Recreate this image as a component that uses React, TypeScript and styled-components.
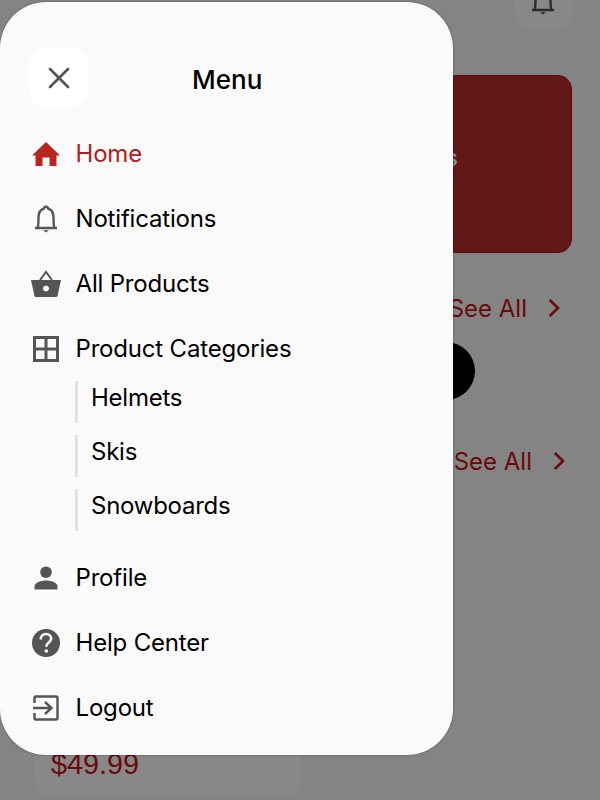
import * as React from "react";
import styled, { createGlobalStyle } from "styled-components";
import { X } from "lucide-react";

const GlobalStyle = createGlobalStyle`
	html, body {
		margin: 0;
		padding: 0;
		height: 100%;
		background: #848484;
		overflow: hidden;
	}
	body {
		font-family: Inter, "Liberation Sans", sans-serif;
	}
`;

const Screen = styled.div`
	position: relative;
	width: 600px;
	height: 800px;
	overflow: hidden;
	background: #848484;
`;

/* dimmed page behind the drawer */
const Page = styled.div`
	height: 800px;
	padding: 0 28px;
	box-sizing: border-box;
	display: flex;
	flex-direction: column;
`;

const TopBar = styled.div`
	height: 75px;
	display: flex;
	justify-content: flex-end;
	flex-shrink: 0;
`;

const PageTitle = styled.div`
	margin: -28px 201px 0 0;
	height: 30px;
	line-height: 30px;
	font-size: 28px;
	font-weight: 600;
	color: #000;
`;

const BellButton = styled.div`
	width: 58px;
	height: 28px;
	background: #888888;
	border-radius: 0 0 14px 14px;
	display: flex;
	align-items: flex-end;
	justify-content: center;
	padding-bottom: 13px;
	box-sizing: border-box;
`;

const Banner = styled.div`
	height: 178px;
	flex-shrink: 0;
	background: #621816;
	border: 1px solid #610a0a;
	border-radius: 14px;
	box-sizing: border-box;
	display: flex;
	align-items: center;
	justify-content: flex-end;
	padding: 0 113px 14px 0;
`;

const BannerText = styled.div`
	color: #8f8f8f;
	font-size: 24px;
	font-weight: 500;
`;

const SeeAllRow = styled.div<{ $top: number; $shift: number }>`
	margin-top: ${(p) => p.$top}px;
	padding-right: ${(p) => p.$shift}px;
	display: flex;
	justify-content: flex-end;
	align-items: center;
	gap: 21px;
	height: 32px;
	flex-shrink: 0;
	color: #6a0a0a;
	font-size: 24px;
`;

const CircleRow = styled.div`
	margin-top: 18px;
	height: 58px;
	padding-right: 97px;
	display: flex;
	justify-content: flex-end;
	flex-shrink: 0;
`;

const Circle = styled.div`
	width: 58px;
	height: 58px;
	border-radius: 50%;
	background: #000;
`;

const ProductCard = styled.div`
	margin: 238px 0 0 6px;
	width: 266px;
	height: 80px;
	flex-shrink: 0;
	background: #888888;
	border-radius: 14px;
	padding: 34px 17px 0;
	box-sizing: border-box;
`;

const Price = styled.div`
	color: #6a0a0a;
	font: 28.8px "Liberation Sans", Arial, sans-serif;
	line-height: 30px;
`;

/* drawer lies over the page */
const Drawer = styled.div`
	position: absolute;
	left: 0;
	top: 2px;
	width: 453px;
	height: 753px;
	background: #fafafa;
	border-radius: 46px;
	box-shadow: 0 0 2px rgba(0, 0, 0, 0.45);
	padding: 46px 0 0 29px;
	box-sizing: border-box;
`;

const Header = styled.div`
	display: flex;
	align-items: center;
	height: 59px;
	margin-bottom: 14px;
`;

const CloseButton = styled.div`
	width: 59px;
	height: 59px;
	background: #fff;
	border-radius: 16px;
	display: flex;
	align-items: center;
	justify-content: center;
	color: #555;
	flex-shrink: 0;
`;

const Title = styled.div`
	margin-left: 104px;
	font-size: 26px;
	font-weight: 500;
	color: #000;
	position: relative;
	top: 2px;
`;

const NavList = styled.div`
	display: flex;
	flex-direction: column;
`;

const NavItem = styled.div<{ $active?: boolean }>`
	height: 65px;
	display: flex;
	align-items: center;
	gap: 12.5px;
	font-size: 24px;
	letter-spacing: -0.18px;
	color: ${(p) => (p.$active ? "#b71c1c" : "#000")};
`;

const IconBox = styled.div`
	width: 34px;
	height: 34px;
	display: flex;
	align-items: center;
	justify-content: center;
	flex-shrink: 0;
`;

const SubList = styled.div`
	display: flex;
	flex-direction: column;
	gap: 12px;
	margin: 0 0 14px 46px;
`;

const SubItem = styled.div`
	height: 42px;
	box-sizing: border-box;
	border-left: 3px solid #e2e2e2;
	padding: 0 0 10px 13px;
	display: flex;
	align-items: center;
	font-size: 24px;
	letter-spacing: -0.25px;
	color: #000;
`;

const HomeIcon = () => (
	<svg width="28" height="24" viewBox="0 0 28 24">
		<path
			d="M14 0 L28 13.5 H24.5 V24 H17.5 V15.5 H10.5 V24 H3.5 V13.5 H0 Z"
			fill="#b9261f"
		/>
	</svg>
);

const BellIcon = ({ color = "#555" }: { color?: string }) => (
	<svg width="24" height="28" viewBox="0 0 24 28" fill="none">
		<path
			d="M1 23 H23 M3.5 23 C4.5 21 4.5 18 4.5 12 C4.5 7.5 7 4.5 10 3.5 C10.4 1 13.6 1 14 3.5 C17 4.5 19.5 7.5 19.5 12 C19.5 18 19.5 21 20.5 23"
			stroke={color}
			strokeWidth="2.4"
		/>
		<path d="M9 25.2 H15 L12 27.4 Z" fill={color} />
	</svg>
);

const BasketIcon = () => (
	<svg width="32" height="28" viewBox="0 0 32 28">
		<path d="M10 10 L16 2 L22 10" fill="none" stroke="#555" strokeWidth="2" />
		<path
			fillRule="evenodd"
			d="M1 10 H31 L27.5 26 Q27.2 27 26 27 H6 Q4.8 27 4.5 26 Z M16 15.5 a3 3 0 1 0 0.01 0 Z"
			fill="#555"
		/>
	</svg>
);

const GridIcon = () => (
	<svg width="26" height="26" viewBox="0 0 26 26" fill="none" stroke="#555" strokeWidth="3">
		<rect x="1.5" y="1.5" width="23" height="23" />
		<path d="M13 1 V25 M1 13 H25" />
	</svg>
);

const PersonIcon = () => (
	<svg width="24" height="24" viewBox="0 0 24 24" fill="#555">
		<circle cx="12" cy="6.2" r="5.8" />
		<path d="M0.5 23.5 V20.5 C0.5 16.5 7 14.5 12 14.5 C17 14.5 23.5 16.5 23.5 20.5 V23.5 Z" />
	</svg>
);

const HelpIcon = () => (
	<svg width="28" height="28" viewBox="0 0 28 28">
		<circle cx="14" cy="14" r="14" fill="#555" />
		<path
			d="M8.8 10.4 C8.8 7 11.2 5 14 5 C17 5 19.2 7 19.2 9.8 C19.2 13.2 14.3 13.6 14.3 17.8"
			fill="none"
			stroke="#fff"
			strokeWidth="2.6"
		/>
		<circle cx="14.3" cy="22" r="1.8" fill="#fff" />
	</svg>
);

const LogoutIcon = () => (
	<svg width="26" height="26" viewBox="0 0 26 26" fill="none" stroke="#555" strokeWidth="2.4">
		<path d="M1.5 8 V3 Q1.5 1.5 3 1.5 H23 Q24.5 1.5 24.5 3 V23 Q24.5 24.5 23 24.5 H3 Q1.5 24.5 1.5 23 V18" />
		<path d="M0 13 H18 M12 7 L18.5 13 L12 19" />
	</svg>
);

const ChevronIcon = () => (
	<svg width="12" height="18" viewBox="0 0 12 18" fill="none" stroke="#6a0a0a" strokeWidth="2.6">
		<path d="M1.8 1 L10 9 L1.8 17" />
	</svg>
);

const items = [
	{ label: "Profile", icon: <PersonIcon /> },
	{ label: "Help Center", icon: <HelpIcon /> },
	{ label: "Logout", icon: <LogoutIcon /> },
];

function App() {
	return (
		<Screen>
			<GlobalStyle />
			<Page>
				<TopBar>
					<PageTitle>Home</PageTitle>
					<BellButton>
						<BellIcon color="#2b2b2b" />
					</BellButton>
				</TopBar>
				<Banner>
					<BannerText>Products</BannerText>
				</Banner>
				<SeeAllRow $top={39} $shift={12}>
					See All
					<ChevronIcon />
				</SeeAllRow>
				<CircleRow>
					<Circle />
				</CircleRow>
				<SeeAllRow $top={45} $shift={7}>
					See All
					<ChevronIcon />
				</SeeAllRow>
				<ProductCard>
					<Price>$49.99</Price>
				</ProductCard>
			</Page>
			<Drawer>
				<Header>
					<CloseButton>
						<X size={36} strokeWidth={1.8} />
					</CloseButton>
					<Title>Menu</Title>
				</Header>
				<NavList>
					<NavItem $active>
						<IconBox>
							<HomeIcon />
						</IconBox>
						Home
					</NavItem>
					<NavItem>
						<IconBox>
							<BellIcon />
						</IconBox>
						Notifications
					</NavItem>
					<NavItem>
						<IconBox>
							<BasketIcon />
						</IconBox>
						All Products
					</NavItem>
					<NavItem>
						<IconBox>
							<GridIcon />
						</IconBox>
						Product Categories
					</NavItem>
					<SubList>
						<SubItem>Helmets</SubItem>
						<SubItem>Skis</SubItem>
						<SubItem>Snowboards</SubItem>
					</SubList>
					{items.map((item) => (
						<NavItem key={item.label}>
							<IconBox>{item.icon}</IconBox>
							{item.label}
						</NavItem>
					))}
				</NavList>
			</Drawer>
		</Screen>
	);
}

export default App;
